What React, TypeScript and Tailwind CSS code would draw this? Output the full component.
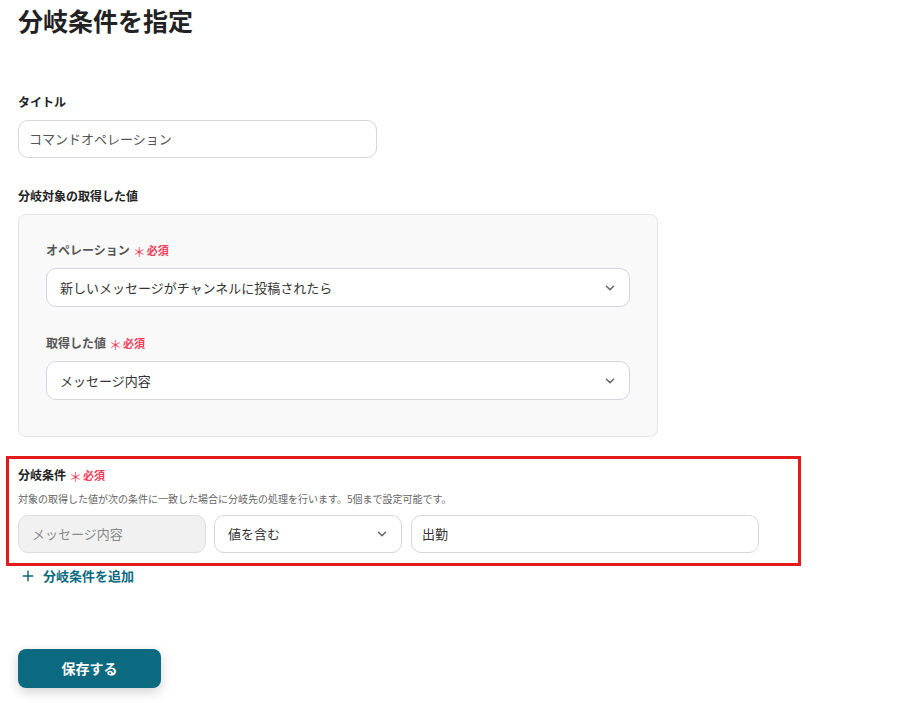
import { ChevronDown, Plus } from 'lucide-react'

const font = { fontFamily: '"Noto Sans CJK JP", "Noto Sans", sans-serif' }

function Required() {
  return (
    <span className="ml-[3px] inline-flex items-center text-[11px] font-bold text-[#f0405a]">
      <span className="mr-[1px] text-[13px] font-normal leading-[10px] translate-y-[2px]">＊</span>
      必須
    </span>
  )
}

function SelectBox({ value, className }: { value: string; className?: string }) {
  return (
    <div
      className={`flex items-center justify-between rounded-[10px] border border-[#d3d6dc] bg-white pl-[13px] pr-[12px] text-[13px] text-[#333] ${className ?? ''}`}
    >
      <span>{value}</span>
      <ChevronDown className="h-[14px] w-[14px] text-[#666]" strokeWidth={2.6} />
    </div>
  )
}

function App() {
  return (
    <div className="min-h-screen bg-white pl-[18px]" style={font}>
      <h1 className="mt-[2px] text-[25px] font-bold leading-[36px] text-[#222]">分岐条件を指定</h1>

      <div className="mt-[55px] text-[12px] font-bold leading-[18px] text-[#222]">タイトル</div>
      <div className="mt-[9px] flex h-[38px] w-[359px] items-center rounded-[10px] border border-[#d3d6dc] bg-white pl-[10px] text-[13px] text-[#555]">
        コマンドオペレーション
      </div>

      <div className="mt-[29px] text-[12px] font-bold leading-[18px] text-[#222]">分岐対象の取得した値</div>
      <div className="mt-[9px] w-[640px] rounded-[8px] border border-[#e3e5e8] bg-[#f9f9f9] px-[27px] pb-[36px] pt-[26px]">
        <div className="flex items-center text-[12px] font-bold leading-[18px] text-[#555]">
          オペレーション
          <Required />
        </div>
        <SelectBox value="新しいメッセージがチャンネルに投稿されたら" className="mt-[9px] h-[39px]" />
        <div className="mt-[27px] flex items-center text-[12px] font-bold leading-[18px] text-[#555]">
          取得した値
          <Required />
        </div>
        <SelectBox value="メッセージ内容" className="mt-[9px] h-[39px]" />
      </div>

      <div className="ml-[-12px] mt-[19px] w-[795px] border-[3px] border-[#e21c1c] pb-[10px] pl-[9px] pt-[7px]">
        <div className="flex items-center text-[12px] font-bold leading-[18px] text-[#222]">
          分岐条件
          <Required />
        </div>
        <div className="mt-[7px] text-[10px] leading-[15px] text-[#666]">
          対象の取得した値が次の条件に一致した場合に分岐先の処理を行います。5個まで設定可能です。
        </div>
        <div className="mt-[9px] flex h-[38px]">
          <div className="flex w-[188px] items-center rounded-[10px] border border-[#dcdde0] bg-[#f1f1f1] pl-[13px] text-[13px] text-[#888]">
            メッセージ内容
          </div>
          <SelectBox value="値を含む" className="ml-[8px] w-[188px]" />
          <div className="ml-[9px] flex w-[348px] items-center rounded-[10px] border border-[#d3d6dc] bg-white pl-[10px] text-[13px] text-[#333]">
            出勤
          </div>
        </div>
      </div>

      <div className="mt-[1px] flex items-center text-[13px] font-bold leading-[18px] text-[#0b6a80]">
        <Plus className="ml-[2px] h-[16px] w-[16px]" strokeWidth={2.2} />
        <span className="ml-[7px]">分岐条件を追加</span>
      </div>

      <button className="mt-[64px] flex h-[39px] w-[143px] items-center justify-center rounded-[8px] bg-[#0b6a80] text-[14px] font-bold text-white shadow-[0_4px_12px_rgba(0,0,0,0.18)]">
        保存する
      </button>
    </div>
  )
}

export default App
